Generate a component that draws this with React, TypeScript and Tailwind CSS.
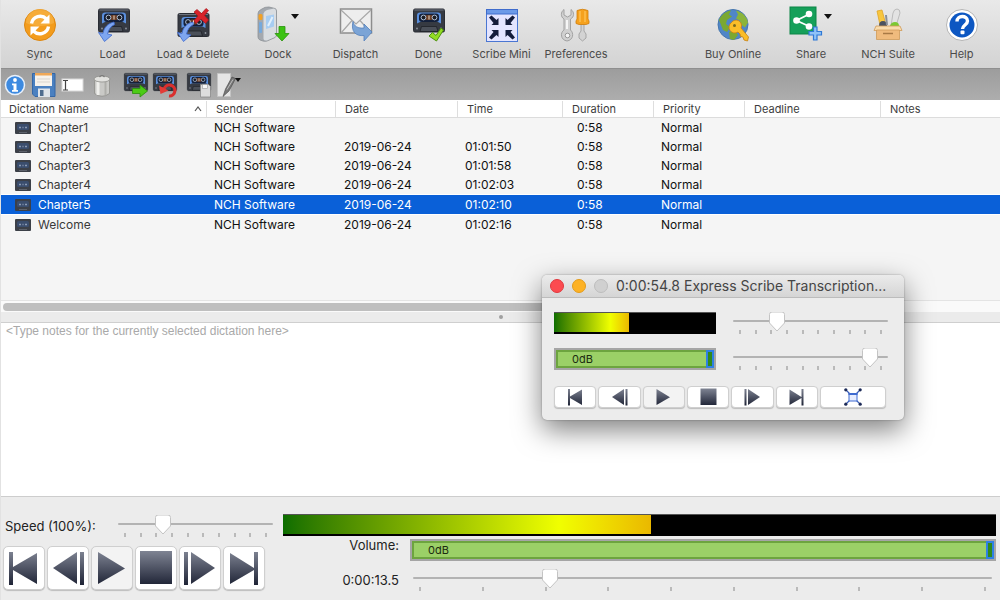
import React, { useState } from "react";

interface Dictation {
    name: string;
    date: string;
    time: string;
}

const dictations: Dictation[] = [
    { name: "Chapter1", date: "", time: "" },
    { name: "Chapter2", date: "2019-06-24", time: "01:01:50" },
    { name: "Chapter3", date: "2019-06-24", time: "01:01:58" },
    { name: "Chapter4", date: "2019-06-24", time: "01:02:03" },
    { name: "Chapter5", date: "2019-06-24", time: "01:02:10" },
    { name: "Welcome", date: "2019-06-24", time: "01:02:16" },
];

// cassette body, drawn in a 32x24 area
const CassetteShape = () => (
    <>
        <rect x="0.5" y="0.5" width="31" height="23" rx="1.5" fill="#363a42" stroke="#2a2d34" />
        <path d="M1.5 1.5h29" stroke="#6d737e" />
        <path d="M4 15V7q0-3 3-3h18q3 0 3 3v8l-3-1.500H7z" fill="#5a8fdd" />
        <rect x="6" y="5" width="20" height="8.500" rx="3" fill="#14203a" />
        <rect x="12" y="6.500" width="8" height="5" rx="2" fill="#6b3f28" />
        <circle cx="10.5" cy="9" r="2.4" fill="#1b1e25" stroke="#aebdd4" strokeWidth="1" />
        <circle cx="21.5" cy="9" r="2.4" fill="#1b1e25" stroke="#aebdd4" strokeWidth="1" />
        <path d="M16 7v4" stroke="#e7d9c8" />
        <path d="M7 23l1.500-5h15l1.500 5z" fill="#4b5059" stroke="#1e2127" strokeWidth="0.8" />
        <circle cx="4" cy="20" r="0.9" fill="#8d939e" />
        <circle cx="28" cy="20" r="0.9" fill="#8d939e" />
    </>
);

const LoadArrow = () => (
    <path
        d="M16 14C10 15.500 6 19 5 25.500L0.500 24.500L6.500 33.500L14 27L9.500 26C10.500 21.500 12.500 18.500 16.500 16.500z"
        fill="#7ea6f0"
        stroke="#3c6ad0"
        strokeWidth="0.8"
    />
);

const big = "w-[34px] h-[34px] overflow-visible";
const small = "w-[24px] h-[24px] overflow-visible";

const SyncIcon = () => (
    <svg viewBox="0 0 34 34" className={big}>
        <circle cx="17" cy="17" r="15.500" fill="#f39c1d" stroke="#dd8711" />
        <path d="M3 15a14 14 0 0 1 28 0c-8 4-20 4-28 0z" fill="#f9b84c" opacity="0.6" />
        <path d="M8.500 15.500a8.800 8.800 0 0 1 15-4.500" fill="none" stroke="#fff" strokeWidth="3.400" />
        <path d="M26.500 6.500v9h-9z" fill="#fff" />
        <path d="M25.500 18.500a8.800 8.800 0 0 1-15 4.500" fill="none" stroke="#fff" strokeWidth="3.400" />
        <path d="M7.500 27.500v-9h9z" fill="#fff" />
    </svg>
);

const LoadIcon = () => (
    <svg viewBox="0 0 34 34" className={big}>
        <g transform="translate(2 0.500)"><CassetteShape /></g>
        <g transform="translate(2 0)"><LoadArrow /></g>
    </svg>
);

const LoadDeleteIcon = () => (
    <svg viewBox="0 0 34 34" className={big}>
        <g transform="translate(1.500 5)"><CassetteShape /></g>
        <g transform="translate(1 0)"><LoadArrow /></g>
        <path d="M18 4l3-2.500 4.500 4 4.500-5 2.500 2-4 5 4 4.500-3 3.500-4.500-4.500-5 4.500-2-3 4-4.500z" fill="#d8232a" stroke="#a9161c" strokeWidth="0.7" />
    </svg>
);

const DockIcon = () => (
    <svg viewBox="0 0 34 34" className={big}>
        <path d="M1 5.500Q1 3 4 1.500Q8-1.500 12-1L18 0.500Q19.500 1 19.500 3V27Q19.500 28.500 18 29.500L10 33Q8 33.500 6 33L3 32Q1 31 1 29z" fill="#a4a9af" stroke="#8b9096" strokeWidth="0.8" />
        <path d="M6.500 5.500Q7 3 10 2L17 .5Q19 1 19 3V27Q19 28.500 17.500 29.200L10 32.500Q7 33 6.500 31z" fill="#d9dde1" />
        <path d="M9 8l8-1.500v12L9 21z" fill="#a7cdf2" />
        <path d="M11 18l4.500-9" stroke="#e1f0fd" strokeWidth="2" />
        <rect x="1.500" y="6" width="4" height="6" rx="1.500" fill="#f2a125" />
        <rect x="2" y="14" width="3" height="11" rx="1" fill="#76a9dc" />
        <path d="M22 18.500h6v7h4l-7 7.500-7-7.500h4z" fill="#3cc213" stroke="#2a930b" strokeWidth="0.8" />
    </svg>
);

const DispatchIcon = () => (
    <svg viewBox="0 0 34 34" className={big}>
        <rect x="1.500" y="1" width="31" height="24" fill="#eeeeee" stroke="#8d8d8d" strokeWidth="1.500" />
        <path d="M2 2l15 14L32 2M2 25l11-12.500M32 25L21 12.500" fill="none" stroke="#a8a8a8" strokeWidth="1.200" />
        <path d="M14 13.500c1 5 5 7 11 6.500v-4l8 8-8 9v-5.500c-8 1-13.500-4-11-14z" fill="#7ba4d6" stroke="#5482bd" strokeWidth="0.8" />
    </svg>
);

const DoneIcon = () => (
    <svg viewBox="0 0 34 34" className={big}>
        <g transform="translate(1 0.500)"><CassetteShape /></g>
        <path d="M17 28l3.500-3.500 3.500 3L29 20l2.500 2L24.500 33z" fill="#93dc22" stroke="#4d9110" />
    </svg>
);

const MiniIcon = () => (
    <svg viewBox="0 0 34 34" className={big}>
        <rect x="1.500" y="1.500" width="31" height="32" fill="#e4e5ff" stroke="#4a76d2" />
        <rect x="1.500" y="1.500" width="31" height="4.500" fill="#6c9ae8" stroke="#3f6ccc" />
        <g fill="#141c3a">
            <path d="M4 9.500l2.500-2 5 4.500 2-2v7h-7l2-2z" />
            <path d="M30 9.500l-2.500-2-5 4.500-2-2v7h7l-2-2z" />
            <path d="M4 29.500l2.500 2 5-4.500 2 2v-7h-7l2 2z" />
            <path d="M30 29.500l-2.500 2-5-4.500-2 2v-7h7l-2 2z" />
        </g>
    </svg>
);

const PreferencesIcon = () => (
    <svg viewBox="0 0 34 34" className={big}>
        <path d="M5 1.500c-3.500 2.500-3.500 7.500 0 9.500v11c-4 2.500-3.500 10 3 11 6.500-1 7-8 3.500-11V11c4-2 4-7 .5-9.500V7L8.500 9 5 7z" fill="#d0d0d0" stroke="#a2a2a2" />
        <circle cx="8.500" cy="27.500" r="2.300" fill="#f5f5f5" stroke="#989898" />
        <path d="M8 12v9" stroke="#f6f6f6" strokeWidth="2" />
        <path d="M22 16h3v7l2 3v4l-3.500 3-3.500-3v-4l2-3z" fill="#d3d3d3" stroke="#999" strokeWidth="0.8" />
        <path d="M18 2.500q5.500-2.500 11 0V11l1 2v2.500l-3 1h-7l-3-1V13l1-2z" fill="#f5a11d" stroke="#d07d0b" strokeWidth="0.8" />
        <path d="M21 3v11M26 3v11" stroke="#ffc65c" strokeWidth="1.200" />
    </svg>
);

const BuyIcon = () => (
    <svg viewBox="0 0 34 34" className={big}>
        <circle cx="17" cy="16.500" r="15" fill="#4f86c8" stroke="#4676ad" />
        <path d="M3 12c2-5 7-9 12-9.500l-2 4 3 2-5 3.500-1 4 4 3-3 5-4-2-2-5z" fill="#7aa832" />
        <path d="M20 2.500c6 1.500 11 6 12 12l-3 5-4-3-1-4-4-2 2-4z" fill="#8ab43a" />
        <path d="M13 24l6-1 3 4-4 5-4-1z" fill="#7aa832" />
        <path d="M15.500 14.500a5.500 5.500 0 0 1 9.500 5.500l7.500 9-1 4-3.500-1-1-3-2.500-.5-.5-2.500-2-2a5.500 5.500 0 0 1-6.500-9.500z" fill="#fbbd28" stroke="#c88210" strokeWidth="0.8" />
        <circle cx="18.500" cy="17.500" r="1.500" fill="#7a6a1d" />
    </svg>
);

const ShareIcon = () => (
    <svg viewBox="0 0 34 34" className={big}>
        <rect x="0" y="-1" width="26" height="27" fill="#16a05a" stroke="#0d8547" />
        <path d="M19.500 6L6.500 12.500l13 6" fill="none" stroke="#fff" strokeWidth="1.800" />
        <circle cx="19" cy="6" r="3.300" fill="#fff" />
        <circle cx="6.500" cy="12.500" r="3.300" fill="#fff" />
        <circle cx="19" cy="18.500" r="3.300" fill="#fff" />
        <path d="M23.500 19H27v4.500h4.500V27H27v5h-3.500v-5H19v-3.500h4.500z" fill="#8fc2f8" stroke="#2f79d6" strokeWidth="1.200" />
    </svg>
);

const SuiteIcon = () => (
    <svg viewBox="0 0 34 34" className={big}>
        <path d="M6 3l5-1 4 15H9z" fill="#f8c63e" stroke="#dfa526" strokeWidth="0.8" />
        <path d="M22 5q1-4 4-4t3 4l-4 13h-5z" fill="#e3e3e3" stroke="#b0b0b0" strokeWidth="0.8" />
        <path d="M8 18q0-5 4-5t4 5z" fill="#4b5260" />
        <path d="M19 18q1-4 5-4t4 4z" fill="#7cc932" />
        <path d="M15 7l1 10" stroke="#8a8f98" strokeWidth="2" />
        <path d="M5 18h24l2 4.500H3z" fill="#f9dcae" stroke="#cf9a58" strokeWidth="0.8" />
        <path d="M5.500 22h23v9.500h-23z" fill="#efbb7d" stroke="#cf9a58" strokeWidth="0.8" />
        <path d="M12 25.500h10" stroke="#a87a45" strokeWidth="1.500" />
    </svg>
);

const HelpIcon = () => (
    <svg viewBox="0 0 34 34" className={big}>
        <circle cx="17" cy="17" r="15.500" fill="#fff" stroke="#b5b5b5" />
        <circle cx="17" cy="17" r="12.500" fill="#0d57c2" />
        <path d="M12 13.500c0-6.500 10.500-6.500 10.500-.5 0 4-5 4-5 8" fill="none" stroke="#fff" strokeWidth="3.400" />
        <rect x="15.500" y="22.500" width="4" height="3.800" rx="1" fill="#fff" />
    </svg>
);

const Caret = () => (
    <svg viewBox="0 0 8 5" className="w-[8px] h-[5px]">
        <path d="M0 0h8L4 5z" fill="#111" />
    </svg>
);

const InfoIcon = () => (
    <svg viewBox="0 0 24 24" className={small}>
        <circle cx="12" cy="12" r="9.500" fill="#3d8ae0" stroke="#e9f1fb" strokeWidth="1.500" />
        <circle cx="12" cy="7" r="1.900" fill="#fff" />
        <path d="M9 10.500h4.500V17H15v1.800H9V17h1.500v-4.700H9z" fill="#fff" />
    </svg>
);

const SaveIcon = () => (
    <svg viewBox="0 0 24 24" className={small}>
        <path d="M0.500 0.500H23v23H3L0.500 21z" fill="#4a80c0" stroke="#3567a6" />
        <rect x="3" y="0" width="17" height="13" fill="#f6f2ec" />
        <rect x="3" y="0" width="17" height="2.500" fill="#f0a857" />
        <path d="M5 6h13M5 9h13" stroke="#d9d5cf" />
        <rect x="6" y="15.500" width="12" height="8.500" fill="#dfe4ea" />
        <rect x="8" y="17" width="3.500" height="6" fill="#4f6c8e" />
    </svg>
);

const RenameIcon = () => (
    <svg viewBox="0 0 24 24" className={small}>
        <rect x="1" y="6" width="21" height="12" fill="#fff" stroke="#d9d9d9" />
        <path d="M2 7.500h5M2 17h5M4.500 7.500v10" stroke="#444" strokeWidth="1.200" />
    </svg>
);

const TrashIcon = () => (
    <svg viewBox="0 0 24 24" className={small}>
        <path d="M4.500 6h15v14.500Q12 26 4.500 20.500z" fill="#c9c9c6" stroke="#8e8e8a" strokeWidth="0.8" />
        <path d="M8 9v13" stroke="#efefec" strokeWidth="3" />
        <path d="M15.500 9v13" stroke="#aeaeaa" strokeWidth="2" />
        <ellipse cx="12" cy="6" rx="8" ry="3" fill="#e2e2df" stroke="#8f8f8b" strokeWidth="0.8" />
        <path d="M9.500 4q2.500-3 5 0" fill="none" stroke="#777" strokeWidth="1.200" />
    </svg>
);

const SendTapeIcon = () => (
    <svg viewBox="0 0 24 24" className={small}>
        <g transform="scale(0.750)"><CassetteShape /></g>
        <path d="M8.500 15.500H16V12l7.500 6-7.500 6v-3.500H8.500z" fill="#4ccb16" stroke="#2c8f0b" strokeWidth="0.800" />
    </svg>
);

const UndoTapeIcon = () => (
    <svg viewBox="0 0 24 24" className={small}>
        <g transform="scale(0.750)"><CassetteShape /></g>
        <path d="M11 16.500a5.500 5.500 0 1 1 5 6.500" fill="none" stroke="#d92f2e" strokeWidth="3.200" />
        <path d="M6 12.500l1.500 8.500 8-3.500z" fill="#e23b37" />
    </svg>
);

const CopyTapeIcon = () => (
    <svg viewBox="0 0 24 24" className={small}>
        <g transform="scale(0.750)"><CassetteShape /></g>
        <path d="M13.500 11.500h8l2 2V24h-10z" fill="#dddddd" stroke="#8a8a8a" strokeWidth="0.800" />
        <rect x="15.500" y="11.500" width="5" height="4" fill="#f7f7f7" stroke="#999" strokeWidth="0.600" />
    </svg>
);

const EditIcon = () => (
    <svg viewBox="0 0 24 24" className={small}>
        <path d="M1.500 0.500h13v23h-13z" fill="#e6e6e6" stroke="#c4c4c4" />
        <path d="M7 23.500L9.500 16 16 4l3.500 1.500L13 18z" fill="#777" stroke="#444" strokeWidth="0.600" />
        <path d="M11 16.500l6-10" stroke="#bdbdbd" />
        <path d="M19 5h6l-3 4z" fill="#111" />
    </svg>
);

type ToolItem = { label: string; icon: React.ReactNode; width: string; menu?: boolean };

const leftTools: ToolItem[] = [
    { label: "Sync", icon: <SyncIcon />, width: "w-[73px]" },
    { label: "Load", icon: <LoadIcon />, width: "w-[73px]" },
    { label: "Load & Delete", icon: <LoadDeleteIcon />, width: "w-[88px]" },
    { label: "Dock", icon: <DockIcon />, width: "w-[82px]", menu: true },
    { label: "Dispatch", icon: <DispatchIcon />, width: "w-[73px]" },
    { label: "Done", icon: <DoneIcon />, width: "w-[73px]" },
    { label: "Scribe Mini", icon: <MiniIcon />, width: "w-[73px]" },
    { label: "Preferences", icon: <PreferencesIcon />, width: "w-[76px]" },
];

const rightTools: ToolItem[] = [
    { label: "Buy Online", icon: <BuyIcon />, width: "w-[76px]" },
    { label: "Share", icon: <ShareIcon />, width: "w-[80px]", menu: true },
    { label: "NCH Suite", icon: <SuiteIcon />, width: "w-[74px]" },
    { label: "Help", icon: <HelpIcon />, width: "w-[73px]" },
];

const ToolButton = ({ item }: { item: ToolItem }) => (
    <button className={`${item.width} flex flex-col items-center`}>
        <span className="flex items-start">
            {item.icon}
            {item.menu && <span className="pt-[6px]"><Caret /></span>}
        </span>
        <span className="mt-1 text-[11px] leading-4 text-[#4a4a4a] whitespace-nowrap">{item.label}</span>
    </button>
);

const quickTools = [
    [
        { label: "Properties", icon: <InfoIcon /> },
        { label: "Save", icon: <SaveIcon /> },
        { label: "Rename", icon: <RenameIcon /> },
        { label: "Delete", icon: <TrashIcon /> },
    ],
    [
        { label: "Send dictation", icon: <SendTapeIcon /> },
        { label: "Undo", icon: <UndoTapeIcon /> },
    ],
    [
        { label: "Copy dictation", icon: <CopyTapeIcon /> },
        { label: "Edit", icon: <EditIcon /> },
    ],
];

const Slider = ({ label, id, start }: { label: string; id: string; start: number }) => {
    const [value, setValue] = useState(start);
    return (
        <div className="relative w-full h-[22px]">
            <input
                id={id}
                type="range"
                min={0}
                max={1000}
                aria-label={label}
                value={value}
                onChange={(e) => setValue(Number(e.target.value))}
                className="block w-full h-[18px] appearance-none bg-transparent [&::-webkit-slider-runnable-track]:h-[2px] [&::-webkit-slider-runnable-track]:rounded [&::-webkit-slider-runnable-track]:bg-[#b3b3b3] [&::-webkit-slider-thumb]:appearance-none [&::-webkit-slider-thumb]:w-[16px] [&::-webkit-slider-thumb]:h-[2px] [&::-webkit-slider-thumb]:opacity-0"
            />
            <div className="absolute inset-x-[6px] bottom-0 flex justify-between pointer-events-none">
                {
                    new Array(10).fill(0).map((_, i) => (
                        <span key={i} className="w-[2px] h-[4px] bg-[#bababa]" />
                    ))
                }
            </div>
            <div className="absolute top-0 inset-x-[7px] pointer-events-none">
                <svg
                    viewBox="0 0 18 21"
                    className="absolute top-0 w-[18px] h-[21px] -translate-x-1/2"
                    style={{ left: `${value / 10}%` }}
                >
                    <path d="M1.500 2.500q0-2.500 2.500-2.500h10q2.500 0 2.500 2.500v8.500L9 19l-7.500-8z" fill="#fff" stroke="#c4c4c4" />
                </svg>
            </div>
        </div>
    );
};

const VolumeBar = ({ id, label }: { id: string; label: string }) => (
    <div className="relative w-full h-[22px] border-2 border-[#a5a5a5]">
        <input
            id={id}
            type="range"
            aria-label={label}
            defaultValue={100}
            className="block w-full h-[18px] appearance-none bg-[#9bd067] shadow-[inset_0_0_0_2px_#6da43f] [&::-webkit-slider-thumb]:appearance-none [&::-webkit-slider-thumb]:w-[8px] [&::-webkit-slider-thumb]:h-[18px] [&::-webkit-slider-thumb]:border-2 [&::-webkit-slider-thumb]:border-[#2f80e4] [&::-webkit-slider-thumb]:bg-[#2f8a1c]"
        />
        <span className="absolute left-[16px] top-[1px] text-[11px] leading-4 text-[#1c2b10] pointer-events-none">0dB</span>
    </div>
);

const LevelMeter = ({ level }: { level: number }) => (
    <div role="meter" aria-label="Level" aria-valuenow={level} className="w-full h-[22px] bg-black border-t border-[#555] pb-[2px]">
        <div
            className="h-full bg-linear-to-r from-[#0a6e00] via-[#f0ff00] via-75% to-[#eab800]"
            style={{ width: `${level}%` }}
        />
    </div>
);

const transport = [
    { label: "Go to start", shape: <path d="M6 6h4v15L34 7v31L10 24v15H6z" /> },
    { label: "Rewind", shape: <path d="M6 22L30 6v32zM33 6h4v33h-4z" /> },
    { label: "Play", shape: <path d="M7 6l27 16.500L7 38z" /> },
    { label: "Stop", shape: <path d="M5 5h32v33H5z" /> },
    { label: "Fast forward", shape: <path d="M5 6h4v33H5zM12 6l24 16-24 16z" /> },
    { label: "Go to end", shape: <path d="M7 7l24 15V6h4v33h-4V24L7 38z" /> },
];

const TransportButtons = ({ mini }: { mini?: boolean }) => {
    const gradientId = mini ? "steel-mini" : "steel";
    return (
        <>
            {
                transport.map((t, i) => (
                    <button
                        key={t.label}
                        aria-label={t.label}
                        className={`flex items-center justify-center border border-[#cfcfcf] shadow-[0_1px_1px_#bdbdbd]
                            ${mini ? "flex-1 h-[22px] rounded-[4px]" : "w-[42px] h-[44px] rounded-[5px]"}
                            ${t.label === "Play" ? "bg-[#f3f3f3]" : "bg-white"}
                        `}
                    >
                        <svg
                            viewBox="0 0 42 44"
                            className={mini ? "w-[21px] h-[22px] shrink-0" : "w-[42px] h-[44px] shrink-0"}
                            fill={`url(#${gradientId})`}
                        >
                            {i === 0 && (
                                <defs>
                                    <linearGradient id={gradientId} gradientUnits="userSpaceOnUse" x1="0" y1="5" x2="0" y2="39">
                                        <stop offset="0" stopColor="#7f8493" />
                                        <stop offset="1" stopColor="#1f2436" />
                                    </linearGradient>
                                </defs>
                            )}
                            {t.shape}
                        </svg>
                    </button>
                ))
            }
        </>
    );
};

const columns = [
    { title: "Dictation Name", width: "w-[205px]" },
    { title: "Sender", width: "w-[129px]" },
    { title: "Date", width: "w-[122px]" },
    { title: "Time", width: "w-[105px]" },
    { title: "Duration", width: "w-[91px]" },
    { title: "Priority", width: "w-[91px]" },
    { title: "Deadline", width: "w-[136px]" },
    { title: "Notes", width: "" },
];

const DictationTable = () => {
    const [selected, setSelected] = useState("Chapter5");
    return (
        <table className="w-full table-fixed border-separate border-spacing-0 text-left text-[12px] leading-[18px]">
            <thead>
                <tr className="bg-white h-[18px]">
                    {
                        columns.map((c, i) => (
                            <th key={c.title} className={`${c.width} p-0 font-normal text-[11px] leading-4 text-[#3c3c3c] border-b border-[#dcdcdc]`}>
                                <div className={`flex items-center justify-between pr-1 ${i > 0 ? "pl-[9px] border-l border-[#dedede]" : "pl-[8px]"}`}>
                                    {c.title}
                                    {i === 0 && (
                                        <svg viewBox="0 0 8 6" className="w-[8px] h-[6px]">
                                            <path d="M1 5l3-4 3 4" fill="none" stroke="#555" strokeWidth="1.200" />
                                        </svg>
                                    )}
                                </div>
                            </th>
                        ))
                    }
                </tr>
            </thead>
            <tbody>
                {
                    dictations.map((d) => {
                        const active = d.name === selected;
                        const line = active ? "border-y border-white" : "";
                        return (
                            <tr
                                key={d.name}
                                onClick={() => setSelected(d.name)}
                                className={active ? "h-[21px] bg-[#0a60d8] text-white" : "h-[19px] text-[#111]"}
                            >
                                <td className={`p-0 pl-[14px] ${line}`}>
                                    <div className={`flex items-center gap-[7px] ${active ? "" : "text-[#3a3a3a]"}`}>
                                        <svg viewBox="0 0 16 12" className="w-[16px] h-[12px]">
                                            <rect width="16" height="12" rx="1" fill="#3c4048" />
                                            <rect x="2" y="2" width="12" height="6" rx="1.500" fill="#3a4d6d" />
                                            <path d="M4 5.500h2M7.500 5.500h1M10 5.500h2" stroke="#8b9ab3" strokeWidth="1.500" />
                                            <path d="M4 10.500h8" stroke="#5d626c" />
                                        </svg>
                                        {d.name}
                                    </div>
                                </td>
                                <td className={`p-0 pl-[8px] ${line}`}>NCH Software</td>
                                <td className={`p-0 pl-[9px] ${line}`}>{d.date}</td>
                                <td className={`p-0 pl-[8px] ${line}`}>{d.time}</td>
                                <td className={`p-0 pl-[15px] ${line}`}>0:58</td>
                                <td className={`p-0 pl-[8px] ${line}`}>Normal</td>
                                <td className={`p-0 ${line}`}></td>
                                <td className={`p-0 ${line}`}></td>
                            </tr>
                        );
                    })
                }
            </tbody>
        </table>
    );
};

const MiniWindow = () => (
    <section aria-label="Scribe Mini" className="absolute top-[275px] right-[96px] w-[362px] rounded-[5px] bg-[#ececec] shadow-[0_10px_28px_rgba(0,0,0,0.5),0_0_2px_rgba(0,0,0,0.35)]">
        <div className="h-[23px] flex items-center gap-[8px] pl-[8px] rounded-t-[5px] bg-linear-to-b from-[#ebebeb] to-[#d5d5d5] border-b border-[#bcbcbc]">
            <button aria-label="Close" className="w-[14px] h-[14px] rounded-full bg-[#fc4b50] border border-[#e0383e]" />
            <button aria-label="Minimise" className="w-[14px] h-[14px] rounded-full bg-[#fdb225] border border-[#e39c1b]" />
            <button aria-label="Zoom" className="w-[14px] h-[14px] rounded-full bg-[#d0d0d0] border border-[#bdbdbd]" />
            <span className="text-[14px] leading-5 text-[#454545] whitespace-nowrap">0:00:54.8 Express Scribe Transcription...</span>
        </div>
        <div className="px-[12px] pt-[14px] pb-[12px]">
            <div className="grid grid-cols-[162px_1fr] gap-x-[17px] gap-y-[14px] pr-[4px]">
                <LevelMeter level={46} />
                <Slider id="mini-speed" label="Mini speed" start={265} />
                <VolumeBar id="mini-volume" label="Mini volume" />
                <Slider id="mini-position" label="Mini position" start={925} />
            </div>
            <div className="flex gap-[2px] mt-[16px] pr-[6px]">
                <TransportButtons mini />
                <button aria-label="Restore window" className="w-[66px] h-[22px] rounded-[4px] flex items-center justify-center bg-white border border-[#cfcfcf] shadow-[0_1px_1px_#bdbdbd]">
                    <svg viewBox="0 0 18 18" className="w-[18px] h-[18px]">
                        <path d="M2 2l14 14M16 2L2 16" stroke="#3a5db5" strokeWidth="1.200" />
                        <circle cx="1.800" cy="1.800" r="1.600" fill="#1c2a58" />
                        <circle cx="16.200" cy="1.800" r="1.600" fill="#1c2a58" />
                        <circle cx="1.800" cy="16.200" r="1.600" fill="#1c2a58" />
                        <circle cx="16.200" cy="16.200" r="1.600" fill="#1c2a58" />
                        <rect x="5" y="5.500" width="8" height="7.500" fill="#e6ecff" stroke="#3f6bd0" />
                        <path d="M4.500 6h9" stroke="#3f6bd0" strokeWidth="2" />
                    </svg>
                </button>
            </div>
        </div>
    </section>
);

export default function App() {
    return (
        <div className="relative min-h-screen flex flex-col overflow-hidden bg-[#ececec] border-l border-[#e2e2e2] font-['Inter',sans-serif]">
            <header className="h-[68px] pt-[8px] px-[2px] flex items-start justify-between bg-linear-to-b from-[#e9e9e9] to-[#d3d3d3]">
                <div className="flex">
                    {leftTools.map((item) => <ToolButton key={item.label} item={item} />)}
                </div>
                <div className="flex">
                    {rightTools.map((item) => <ToolButton key={item.label} item={item} />)}
                </div>
            </header>
            <nav aria-label="Quick actions" className="h-[32px] flex items-center gap-[5px] bg-linear-to-b from-[#9d9d9d] to-[#adadad] border-t border-[#8f8f8f]">
                {
                    quickTools.map((group, i) => (
                        <div key={i} className="flex">
                            {group.map((t) => (
                                <button key={t.label} aria-label={t.label} className="w-[29px] pr-[2px] flex justify-center">{t.icon}</button>
                            ))}
                        </div>
                    ))
                }
            </nav>
            <main className="flex-1 flex flex-col">
                <div className="h-[200px] bg-[#f5f5f5]">
                    <DictationTable />
                </div>
                <div className="h-[12px] px-[2px] flex items-center bg-[#fafafa] border-t border-[#e4e4e4]">
                    <div className="w-3/5 h-[8px] rounded-full bg-[#bfbfbf]" />
                </div>
                <div className="h-[11px] flex items-center justify-center bg-[#ebebeb] border-b border-[#cfcfcf]">
                    <span className="w-[4px] h-[4px] rounded-full bg-[#a0a0a0]" />
                </div>
                <textarea
                    aria-label="Notes"
                    placeholder="<Type notes for the currently selected dictation here>"
                    className="block w-full flex-1 resize-none outline-none bg-white px-[5px] font-['Liberation_Sans',sans-serif] text-[12px] leading-4 text-[#222] placeholder:text-[#a9a9a9]"
                />
            </main>
            <footer className="h-[104px] flex border-t border-[#cdcdcd] text-[13px] leading-4 text-[#222]">
                <div className="w-[282px] pt-[18px] pl-[2px]">
                    <div className="flex items-center pl-[2px]">
                        <label htmlFor="speed" className="w-[113px]">Speed (100%):</label>
                        <div className="w-[155px]">
                            <Slider id="speed" label="Speed (100%)" start={270} />
                        </div>
                    </div>
                    <div className="flex gap-[2px] mt-[9px]">
                        <TransportButtons />
                    </div>
                </div>
                <div className="flex-1 pt-[17px] pr-[4px]">
                    <LevelMeter level={51.6} />
                    <div className="flex items-start mt-[3px]">
                        <label htmlFor="volume" className="w-[116px] mr-[11px] text-right leading-3">Volume:</label>
                        <div className="flex-1"><VolumeBar id="volume" label="Volume" /></div>
                    </div>
                    <div className="flex items-center mt-[8px]">
                        <label htmlFor="position" className="w-[116px] mr-[14px] text-right">0:00:13.5</label>
                        <div className="flex-1 pr-[4px]"><Slider id="position" label="Position" start={230} /></div>
                    </div>
                </div>
            </footer>
            <MiniWindow />
        </div>
    );
}
